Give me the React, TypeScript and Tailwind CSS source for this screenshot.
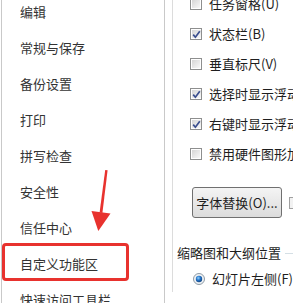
import React from 'react';

const navItems = [
  '编辑',
  '常规与保存',
  '备份设置',
  '打印',
  '拼写检查',
  '安全性',
  '信任中心',
  '自定义功能区',
  '快速访问工具栏',
];

const viewOptions = [
  { label: '任务窗格(U)', checked: false },
  { label: '状态栏(B)', checked: true },
  { label: '垂直标尺(V)', checked: false },
  { label: '选择时显示浮动工具栏(M)', checked: true },
  { label: '右键时显示浮动工具栏(R)', checked: true },
  { label: '禁用硬件图形加速(G)', checked: false },
];

const Checkbox: React.FC<{ checked: boolean }> = ({ checked }) => (
  <span className="w-[12px] h-[12px] shrink-0 border border-[#8e8f8f] bg-white p-[1px] flex">
    <span className="flex-1 bg-linear-to-br from-[#d6d6d6] to-[#f8f8f8] flex items-center justify-center">
      {checked && (
        <svg width="9" height="9" viewBox="0 0 9 9">
          <path d="M1.2 4.6 L3.4 7.2 L7.8 1.2" fill="none" stroke="#3b4f8f" strokeWidth="1.7" />
        </svg>
      )}
    </span>
  </span>
);

const Radio: React.FC = () => (
  <svg width="12" height="12" viewBox="0 0 12 12" className="shrink-0">
    <defs>
      <radialGradient id="dot" cx="40%" cy="35%" r="60%">
        <stop offset="0%" stopColor="#8fd0ff" />
        <stop offset="60%" stopColor="#1f6fc4" />
        <stop offset="100%" stopColor="#1a4f8c" />
      </radialGradient>
    </defs>
    <circle cx="6" cy="6" r="5.5" fill="#eef1f4" stroke="#8e9aa5" />
    <circle cx="6" cy="6" r="3.2" fill="url(#dot)" />
  </svg>
);

export default function App() {
  return (
    <div className="relative w-[293px] h-[303px] overflow-hidden bg-white flex font-['Noto_Sans_CJK_SC',sans-serif] text-[13px]">
      {/* left nav */}
      <div className="ml-[1px] w-[164px] shrink-0 border-l border-r border-[#c9c9c9] overflow-hidden">
        <div className="-mt-[6px] pl-[18px]">
          {navItems.map((item) => (
            <div key={item} className="h-[36px] flex items-center text-[#333] whitespace-nowrap">
              {item}
            </div>
          ))}
        </div>
      </div>

      {/* right options */}
      <div className="flex-1 overflow-hidden">
        <div className="ml-[7px] h-full border-l border-[#dcdcdc] text-[#1e1e1e]">
          <div className="-mt-[11px]">
            {viewOptions.map((opt) => (
              <div key={opt.label} className="h-[30px] pl-[17px] flex items-center gap-[7px] whitespace-nowrap">
                <Checkbox checked={opt.checked} />
                <span>{opt.label}</span>
              </div>
            ))}
          </div>

          <div className="mt-[18px] pl-[19px] flex items-center gap-[7px]">
            <div className="w-[90px] h-[31px] shrink-0 rounded-[3px] border border-[#707070] bg-linear-to-b from-[#f4f4f4] to-[#dcdcdc] flex items-center justify-center whitespace-nowrap">
              字体替换(O)...
            </div>
            <span className="w-[12px] h-[12px] shrink-0 border border-[#a0a0a0] bg-[#f2f2f2]" />
          </div>

          <div className="mt-[27px] pl-[4px] h-[16px] flex items-center gap-[4px] whitespace-nowrap">
            <span>缩略图和大纲位置</span>
            <span className="flex-1 border-t border-[#d5dfe5]" />
          </div>

          <div className="mt-[8px] pl-[20px] h-[20px] flex items-center gap-[7px] whitespace-nowrap">
            <Radio />
            <span>幻灯片左侧(F)</span>
          </div>
        </div>
      </div>

      {/* annotation: highlight box */}
      <div className="absolute left-[2px] top-[243px] w-[127px] h-[38px] border-[3px] border-[#e8322e] rounded-[4px]" />

      {/* annotation: arrow */}
      <svg className="absolute left-[86px] top-[166px]" width="30" height="70" viewBox="0 0 30 70">
        <path d="M19.2 4 L21.6 4.3 L16.4 47 L13.6 46.6 Z" fill="#e8322e" />
        <path d="M5.5 45 L24.5 47.5 L12.3 65 Z" fill="#e8322e" />
      </svg>
    </div>
  );
}
